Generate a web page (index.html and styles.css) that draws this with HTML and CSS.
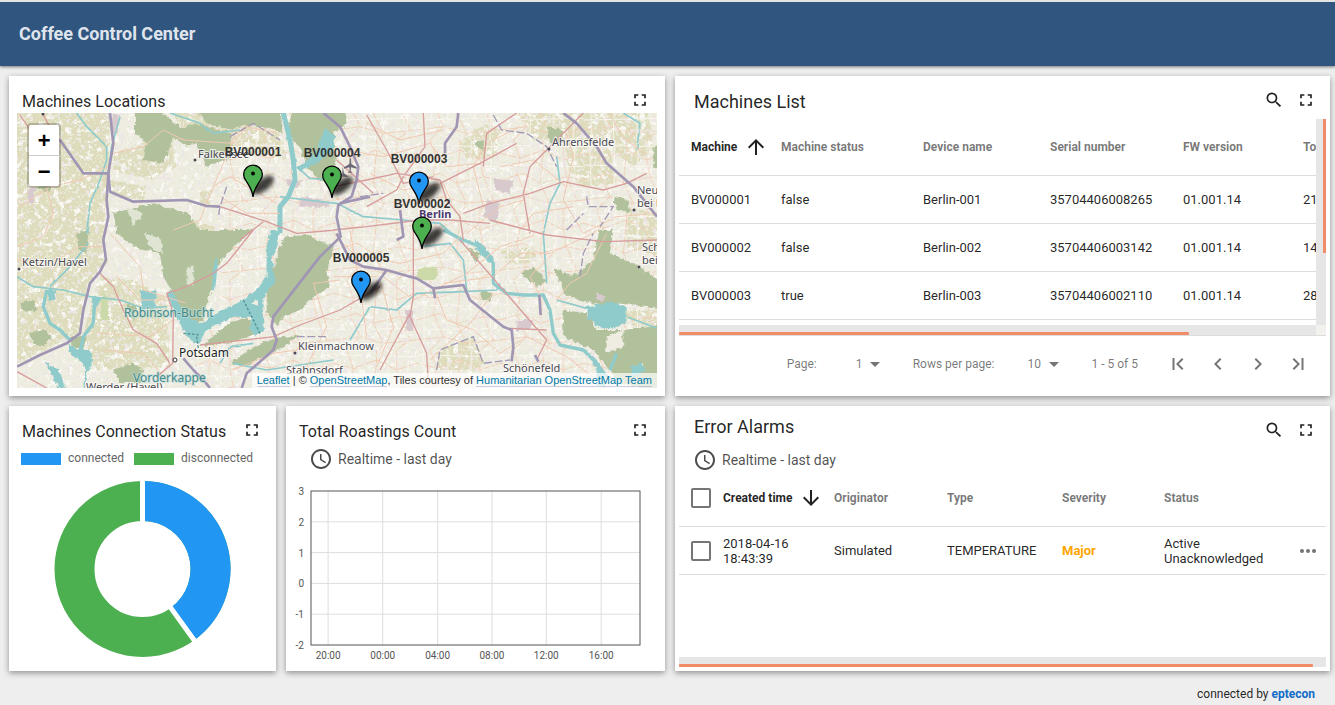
FILE: index.html
```
<!DOCTYPE html>
<html lang="en">
<head>
<meta charset="utf-8">
<title>Coffee Control Center</title>
<link rel="stylesheet" href="styles.css">
</head>
<body>
<svg class="defs" aria-hidden="true">
  <symbol id="i-full" viewBox="0 0 24 24"><path d="M7 14H5v5h5v-2H7v-3zm-2-4h2V7h3V5H5v5zm12 7h-3v2h5v-5h-2v3zM14 5v2h3v3h2V5h-5z"/></symbol>
  <symbol id="i-search" viewBox="0 0 24 24"><path d="M15.5 14h-.79l-.28-.27A6.47 6.47 0 0 0 16 9.5 6.5 6.5 0 1 0 9.5 16c1.61 0 3.09-.59 4.23-1.57l.27.28v.79l5 4.99L20.49 19l-4.99-5zm-6 0C7.01 14 5 11.99 5 9.5S7.01 5 9.5 5 14 7.01 14 9.5 11.99 14 9.5 14z"/></symbol>
  <symbol id="i-clock" viewBox="0 0 24 24"><path d="M11.99 2C6.47 2 2 6.48 2 12s4.47 10 9.99 10C17.52 22 22 17.52 22 12S17.52 2 11.99 2zM12 20c-4.42 0-8-3.58-8-8s3.58-8 8-8 8 3.58 8 8-3.58 8-8 8zm.5-13H11v6l5.25 3.15.75-1.23-4.5-2.67z"/></symbol>
  <symbol id="i-arrow" viewBox="0 0 24 24"><path d="M4 12l1.41 1.41L11 7.83V20h2V7.83l5.58 5.59L20 12l-8-8-8 8z"/></symbol>
  <symbol id="i-next" viewBox="0 0 24 24"><path d="M10 6L8.590 7.410 13.170 12l-4.580 4.590L10 18l6-6z"/></symbol>
  <symbol id="i-last" viewBox="0 0 24 24"><path d="M6.590 7.410L11.180 12l-4.590 4.590L8 18l6-6-6-6zM15.500 6h2v12h-2z"/></symbol>
  <symbol id="i-pin" viewBox="-12 -36 36 38" overflow="visible">
    <ellipse cx="10" cy="-12" rx="13" ry="6" transform="rotate(-38 10 -12)" class="pin-shadow"/>
    <path d="M0 0C-.8-8-4-11-7.500-17A9.300 9.300 0 1 1 7.500-17C4-11 .8-8 0 0z" stroke="#000" stroke-width="1.300"/>
    <circle cx="0" cy="-23.500" r="1.900" fill="#000"/>
  </symbol>
</svg>

<header class="topbar"><h1>Coffee Control Center</h1></header>

<main class="board">
  <section class="card card-map">
    <div class="card-head"><h2>Machines Locations</h2><button class="icon-btn" aria-label="Fullscreen"><svg class="icon"><use href="#i-full"/></svg></button></div>
    <div class="map">
      <svg class="map-art" viewBox="0 0 640 275" preserveAspectRatio="xMidYMid slice" role="img" aria-label="Map of Berlin">
        <defs>
          <filter id="rough" x="-5%" y="-5%" width="110%" height="110%"><feTurbulence type="fractalNoise" baseFrequency=".07" numOctaves="3" seed="4"/><feDisplacementMap in="SourceGraphic" scale="16" xChannelSelector="R" yChannelSelector="G"/></filter>
          <filter id="wobble" x="-5%" y="-5%" width="110%" height="110%"><feTurbulence type="fractalNoise" baseFrequency=".04" numOctaves="2" seed="9"/><feDisplacementMap in="SourceGraphic" scale="6" xChannelSelector="R" yChannelSelector="G"/></filter>
          <filter id="speckGreen" x="0" y="0" width="100%" height="100%"><feTurbulence type="fractalNoise" baseFrequency=".11" numOctaves="3" seed="21"/><feColorMatrix values="0 0 0 0 .79  0 0 0 0 .84  0 0 0 0 .68  14 0 0 0 -8.400"/></filter>
          <filter id="speckPink" x="0" y="0" width="100%" height="100%"><feTurbulence type="fractalNoise" baseFrequency=".07" numOctaves="3" seed="33"/><feColorMatrix values="0 0 0 0 .85  0 0 0 0 .79  0 0 0 0 .80  0 14 0 0 -8.800"/></filter>
          <filter id="speckPale" x="0" y="0" width="100%" height="100%"><feTurbulence type="fractalNoise" baseFrequency=".05" numOctaves="4" seed="52"/><feColorMatrix values="0 0 0 0 .945  0 0 0 0 .93  0 0 0 0 .89  14 0 0 0 -8.300"/></filter>
          <pattern id="streets" width="250" height="210" patternUnits="userSpaceOnUse">
            <g fill="none" stroke="#f0cfb9" stroke-width="3">
              <path d="M0 40 60 55 130 30 190 60 250 40M0 120 70 100 120 130 200 110 250 120M0 180 80 170 150 190 250 180M40 0 60 55 50 100 80 170 40 210M130 0 130 30 120 130 150 190 140 210M190 0 190 60 200 110 230 180 190 210"/>
            </g>
            <path d="M20 0 25 210M95 0 90 210M165 0 160 210M225 0 220 210M0 15 250 20M0 75 250 80M0 150 250 145" fill="none" stroke="#faf7f1" stroke-width="3"/>
          </pattern>
        </defs>
        <g transform="translate(-17 -113) scale(.333333)">
          <rect x="51" y="339" width="1920" height="825" fill="#efece2"/>
          <g filter="url(#rough)">
            <g fill="#dedcbc">
              <path d="M30 320H330L325 520 310 720 320 790 260 860 240 1000 30 1100z"/>
              <path d="M300 830 400 840 500 900 510 1100 290 1110 250 1000z"/>
              <path d="M340 465 480 405 520 430 530 500 450 540 340 510z"/>
              <path d="M500 320H830L860 480 700 450 560 400z"/>
              <path d="M330 540 440 560 430 600 340 590zM600 570 640 570 630 620 600 610zM580 660 660 690 650 760 600 740z"/>
              <path d="M1540 320H1800L1830 410 1800 440 1700 410 1600 420z"/>
              <path d="M1820 320H1940L1960 440 1900 500 1830 450z"/>
              <path d="M1380 430 1450 370 1500 390 1490 470 1400 480z"/>
              <path d="M1700 430 1830 450 1850 550 1740 560 1700 500zM1880 620 1990 650 1990 780 1880 740z"/>
              <path d="M1310 1050 1420 1010 1450 1090 1430 1110 1310 1110zM1500 750 1600 740 1610 790 1520 790zM1870 930 1990 930 1990 970 1900 980z"/>
            </g>
          </g>
          <rect x="51" y="339" width="1920" height="825" filter="url(#speckPale)"/>
          <path d="M660 339H1971V1164H560L660 900z" fill="url(#streets)" filter="url(#wobble)"/>
          <rect x="51" y="339" width="1920" height="825" filter="url(#speckGreen)"/>
          <rect x="51" y="339" width="1920" height="825" filter="url(#speckPink)"/>
          <g filter="url(#rough)">
            <g fill="#b1c19c">
              <path d="M405 335 480 335 545 385 590 370 690 400 700 470 620 500 590 430 560 440 520 410 490 490 430 480 440 430 405 400z"/>
              <path d="M580 320H840L850 400 800 380 740 375 690 390 620 370z"/>
              <path d="M880 320H1030L1040 370 1000 400 1010 520 960 545 920 500 900 440 860 400z"/>
              <path d="M340 640 460 610 560 640 600 690 760 690 700 740 650 800 640 850 620 910 610 960 560 985 540 960 520 880 490 830 480 760 400 740 350 700z"/>
              <path d="M850 710 920 705 1000 740 980 820 990 860 930 900 900 930 850 950 830 975 800 940 800 870 825 790z"/>
              <path d="M610 1035 680 975 740 950 775 1000 700 1025 620 1040zM690 1090 760 1040 820 1015 900 1005 820 1060 730 1100z"/>
              <path d="M340 1110 400 1090 430 1110 420 1150 360 1150zM90 1000 130 990 155 1010 130 1040 100 1030zM210 1010 260 1010 250 1050 215 1040zM230 700 270 690 260 760 235 750zM60 910 100 900 110 930 70 935zM110 560 150 555 150 580zM380 910 410 920 400 960z"/>
              <path d="M1640 380 1690 390 1690 430 1650 430zM1840 590 1885 600 1890 640 1850 630zM1960 440 1990 430 1990 520 1960 500zM1420 430 1450 420 1455 460zM1440 870 1480 880 1470 905 1445 895z"/>
              <path d="M1660 800 1720 830 1780 780 1795 690 1840 690 1830 760 1900 790 1990 850 1990 930 1880 910 1800 915 1700 890z"/>
              <path d="M1690 930 1760 940 1790 990 1870 990 1990 970 1990 1180 1860 1150 1780 1050 1690 1010zM1560 820 1600 800 1640 840 1610 860zM1400 740 1440 760 1430 790z"/>
            </g>
            <path d="M380 620 430 640 400 680zM430 700 480 710 490 760 450 740zM560 800 580 800 580 860 560 850z" fill="#dfe5d2"/>
            <path d="M1820 1010 1870 990 1870 1040 1820 1060zM1890 1100 1930 1090 1920 1120z" fill="#efece2"/>
            <path d="M1250 805 1310 800 1310 840 1255 840zM310 860 330 960 300 960z" fill="#cbdaa8"/>
            <path d="M1460 600 1500 610 1490 670 1450 650zM1480 540 1540 540 1530 580 1490 570zM1550 960 1600 960 1590 990 1550 990zM335 340 358 345 350 400 335 400zM85 560 105 560 100 610 85 610zM900 590 980 600 990 620 900 620zM1215 930 1240 930 1240 990 1220 990zM860 540 900 540 895 560 860 560zM1790 880 1820 890 1800 910z" fill="#d8c9ce"/>
            <g fill="#90cbcc">
              <path d="M812 690 840 690 832 740 815 770 825 850 790 890 790 930 795 990 765 1005 750 990 755 950 700 950 640 980 610 1000 600 1030 580 1030 550 990 500 890 515 870 560 950 600 970 660 935 720 905 770 870 800 830 800 740z"/>
              <path d="M975 385 1005 410 1000 450 950 490 900 515 890 500 940 470z"/>
              <path d="M422 872H467V920L425 922z"/>
              <path d="M140 870 165 870 165 895 150 910zM275 890 305 890 300 910 280 925zM205 1030 230 1050 270 1050 278 1090 260 1120 255 1164 250 1164 255 1110 240 1080 210 1060z"/>
              <path d="M1760 920 1840 905 1880 925 1880 965 1850 985 1800 985 1765 955zM1890 1100 1920 1090 1940 1110 1900 1130z"/>
              <path d="M1420 720 1450 735 1480 775 1470 790 1430 750zM1760 1050 1790 1080 1815 1120 1815 1164 1790 1150 1790 1110z"/>
              <path d="M135 1085 180 1115 195 1164H175L160 1130z"/>
            </g>
            <circle cx="767" cy="910" r="9" fill="#efece2"/>
          </g>
          <g class="line" stroke="#90cbcc" filter="url(#wobble)">
            <path stroke-width="15" d="M850 339 870 420 880 480 885 540 865 590 840 620 840 700"/>
            <path stroke-width="5" d="M840 590 920 600 1010 610 1090 650 1210 660 1320 670 1390 730M51 830 100 860 190 870 270 890 360 900 430 925 500 920M230 339 260 380 320 440 320 480 300 540 270 610 260 700M360 350 335 440 325 520M265 730 210 800 150 860M510 339 600 370 640 400 720 390M890 500 930 535 1000 540M660 1090 690 1040 760 1030M700 1090 800 1110 900 1095 1000 1080M1050 1020 1110 920 1190 930 1250 880 1390 875 1490 870 1500 850M1670 470 1680 550 1650 610 1630 700 1640 850M1870 339 1920 370 1910 450M1270 740 1350 730 1390 780 1400 870M1670 900 1760 925M1880 950 1971 985"/>
            <path stroke-width="10" d="M1330 690 1390 720 1440 740 1480 790 1480 850 1520 880 1570 885 1630 885 1650 930 1660 1000 1680 1035 1750 1050 1790 1090 1820 1130M140 870 130 920 150 970 180 990 210 1020M285 890 280 970 250 1010 240 1060M640 830 650 780 640 870M1850 1060 1830 1110"/>
          </g>
          <g class="line" stroke="#f0c9b2" stroke-width="3" filter="url(#wobble)">
            <path d="M340 460 430 440 490 390 550 420 700 430 740 380 830 400M60 620 150 560 240 540 325 500M51 780 150 790 240 740 310 740M330 700 420 800 430 870 560 910M51 740 130 710 160 640 140 560 160 480M350 830 420 900 500 900M520 690 600 660 640 560 690 530 830 610M640 560 700 420M660 590 740 640 840 640M1000 700 1060 760 1200 790 1330 760 1400 690M920 1100 980 980 940 850 1020 840M1050 690 1080 860 1100 1010M1000 830 1150 830 1240 900 1400 820 1500 740 1620 700M1300 860 1340 960 1420 990 1500 1060M1480 880 1410 970 1290 1080M1130 1100 1180 980 1140 840M1330 850 1480 830 1560 760 1650 760 1800 690M1400 700 1500 620 1570 600M1450 620 1420 500 1460 430 1560 380M1500 500 1600 480 1700 560M1700 400 1720 470 1690 600 1750 700 1850 650 1971 640M1560 690 1600 640 1720 620M1830 339 1860 400 1940 470M1100 370 1200 420 1330 390M1040 450 1150 470 1290 430 1340 500 1440 490M1110 520 1210 570 1330 550 1360 620M1670 900 1710 850 1760 820 1820 700M1620 890 1590 830 1660 760M700 1110 820 1060 960 1040M520 960 450 1010 300 1000M310 1050 430 1060 500 1140M1500 1060 1580 1010 1700 1070 1790 1140"/>
          </g>
          <g class="line" stroke="#d79d9c" stroke-width="4">
            <path d="M51 1115 140 1164M60 345 90 390M130 345 160 400 180 420M660 620 800 665 890 700 1010 690M720 720 790 665M760 690 680 790 640 820 560 860 500 880 520 940 518 1090 470 1130M300 820 340 860 370 930 400 990 470 1030 510 1090M600 1035 820 1010 900 975 1020 930 1090 890 1140 860M1240 690 1240 890 1230 950 1280 1060 1285 1150M1230 940 1140 1110M1380 720 1640 1020 1610 1080M1530 985 1640 990M1100 345 1160 450 1210 550 1300 530M1010 480 1120 580M1270 339 1275 440 1210 530 1190 570 1100 620M1320 540 1340 600 1380 650 1390 720M1320 550 1440 490 1550 430M1390 640 1470 610 1590 580 1690 545 1810 570 1880 550 1940 520M1570 580 1590 500 1640 450 1750 339M1570 580 1590 700M1470 660 1640 705 1810 725 1971 720M1450 500 1460 400 1550 339M1000 560 1100 540 1190 520 1320 540M1000 690 1100 680 1260 660 1350 660 1470 670"/>
          </g>
          <g class="line" stroke="#a39bb6" stroke-width="4">
            <path d="M680 560 660 620 655 650M690 410 760 370 840 420M1080 590 1150 580M1480 345 1505 390 1580 400 1640 440 1670 500M1310 1110 1320 1050 1420 1010 1450 1090 1530 1080M1740 830 1750 760 1780 700M1760 590 1765 620 1840 620 1800 680M890 1010 980 1010M1700 690 1750 640" stroke-dasharray="24 8"/>
            <path d="M730 900 780 1000M550 1000 600 1005M590 1010 595 1045" stroke="#4e9394" stroke-dasharray="8 5"/>
          </g>
          <g class="line" stroke="#a096b4" stroke-width="8">
            <path d="M330 339 340 430 325 520 320 600 325 650 310 720 318 780 300 815 270 850 250 930 240 1000 200 1030 120 1065 51 1100"/>
            <path d="M180 420 250 520 325 520 330 575 400 605 560 600 620 618 660 620M1690 339 1730 370 1790 440 1820 490 1900 560 1971 650M1375 339 1370 380 1335 430 1335 460"/>
            <path d="M970 339 1020 380 1050 440 1075 500 1070 540 1055 590 1015 615 1010 650 1022 710 960 770 820 950 815 980 830 1020 820 1050 740 1120 725 1164"/>
            <path d="M1020 610 1110 590M1200 630 1210 710 1190 720M1010 700 1050 780 1090 800 1160 810 1230 830 1250 835 1300 865 1390 855 1410 900 1510 980 1535 990 1540 1040 1535 1084M1160 810 1110 880M1618 885 1622 945M1605 1065 1615 1085M550 1075 580 1110 610 1140 630 1164M1300 865 1305 895"/>
          </g>
          <g fill="#6d6a78"><path d="M1049 475 1053 475 1054 492 1070 502 1070 506 1053 502 1052 513 1058 518 1042 518 1049 513 1048 502 1032 506 1032 502 1048 492zM1028 500 1032 520 1046 530 1026 530z"/></g>
        </g>
        <g class="place">
          <circle cx="178" cy="47" r="1.500"/><circle cx="532" cy="36" r="1.500"/><circle cx="617" cy="97" r="1.500"/><circle cx="622" cy="154" r="1.500"/><circle cx="2" cy="156" r="1.500"/><circle cx="278" cy="240" r="1.500"/><circle cx="26" cy="1" r="1.500"/>
          <circle cx="158" cy="247" r="2" class="ring"/>
          <text x="181" y="45">Falkensee</text>
          <text x="535" y="33">Ahrensfelde</text>
          <text x="620" y="81">Neu</text><text x="620" y="94">bei B</text>
          <text x="625" y="138">Sch</text><text x="625" y="151">bei</text>
          <text x="5" y="153">Ketzin/Havel</text>
          <text x="281" y="237">Kleinmachnow</text>
          <text x="269" y="261">Stahnsdorf</text>
          <text x="486" y="259">Schönefeld</text>
          <text x="69" y="278">Werder (Havel)</text>
          <text x="162" y="244" class="town">Potsdam</text>
          <text x="107" y="204" class="lake">Robinson-Bucht</text>
          <text x="116" y="269" class="lake">Vorderkappe</text>
          <text x="402" y="105" class="city">Berlin</text>
        </g>
        <g class="pins">
          <use href="#i-pin" x="224" y="48" width="36" height="38" class="green"/>
          <use href="#i-pin" x="303" y="49" width="36" height="38" class="green"/>
          <use href="#i-pin" x="390" y="55" width="36" height="38" class="blue"/>
          <use href="#i-pin" x="393" y="100" width="36" height="38" class="green"/>
          <use href="#i-pin" x="332" y="154" width="36" height="38" class="blue"/>
          <text x="236" y="43">BV000001</text>
          <text x="315" y="44">BV000004</text>
          <text x="402" y="50">BV000003</text>
          <text x="405" y="95">BV000002</text>
          <text x="344" y="149">BV000005</text>
        </g>
      </svg>
      <div class="zoom"><button aria-label="Zoom in">+</button><button aria-label="Zoom out">−</button></div>
      <p class="credit"><a href="#">Leaflet</a> | © <a href="#">OpenStreetMap</a>, Tiles courtesy of <a href="#">Humanitarian OpenStreetMap Team</a></p>
    </div>
  </section>

  <section class="card card-list">
    <div class="card-head wide"><h2 class="big">Machines List</h2><button class="icon-btn" aria-label="Search"><svg class="icon"><use href="#i-search"/></svg></button><button class="icon-btn" aria-label="Fullscreen"><svg class="icon"><use href="#i-full"/></svg></button></div>
    <div class="scroll both">
      <div class="view">
        <table class="list">
          <colgroup><col class="c102"><col class="c142"><col class="c127"><col class="c133"><col class="c120"><col></colgroup>
          <thead><tr><th class="sorted"><span class="sort">Machine<svg class="icon24"><use href="#i-arrow"/></svg></span></th><th>Machine status</th><th>Device name</th><th>Serial number</th><th>FW version</th><th>To</th></tr></thead>
          <tbody>
            <tr><td>BV000001</td><td>false</td><td>Berlin-001</td><td>35704406008265</td><td>01.001.14</td><td>21</td></tr>
            <tr><td>BV000002</td><td>false</td><td>Berlin-002</td><td>35704406003142</td><td>01.001.14</td><td>14</td></tr>
            <tr><td>BV000003</td><td>true</td><td>Berlin-003</td><td>35704406002110</td><td>01.001.14</td><td>28</td></tr>
          </tbody>
        </table>
      </div>
      <div class="vbar"><i></i></div>
      <div class="hbar"><i class="w79"></i></div>
      <div class="corner"></div>
    </div>
    <div class="pager">
      <label for="page">Page:</label>
      <span class="select"><select id="page"><option>1</option></select></span>
      <label for="rows">Rows per page:</label>
      <span class="select"><select id="rows"><option>10</option></select></span>
      <span class="range">1 - 5 of 5</span>
      <button aria-label="First page"><svg class="icon24 flip"><use href="#i-last"/></svg></button>
      <button aria-label="Previous page"><svg class="icon24 flip"><use href="#i-next"/></svg></button>
      <button aria-label="Next page"><svg class="icon24"><use href="#i-next"/></svg></button>
      <button aria-label="Last page"><svg class="icon24"><use href="#i-last"/></svg></button>
    </div>
  </section>

  <section class="card card-donut">
    <div class="card-head"><h2>Machines Connection Status</h2><button class="icon-btn" aria-label="Fullscreen"><svg class="icon"><use href="#i-full"/></svg></button></div>
    <div class="legend"><i class="sw-blue"></i><span>connected</span><i class="sw-green"></i><span>disconnected</span></div>
    <div class="donut">
      <svg viewBox="-90 -90 180 180" role="img" aria-label="40% connected, 60% disconnected">
        <circle r="68" fill="none" stroke="#4caf50" stroke-width="40"/>
        <path d="M0-68A68 68 0 0 1 39.970 55.010" fill="none" stroke="#2196f3" stroke-width="40"/>
        <path d="M0-45V-90M26.500 36.400 53.500 73.700" stroke="#fff" stroke-width="5"/>
      </svg>
    </div>
  </section>

  <section class="card card-chart">
    <div class="card-head"><h2>Total Roastings Count</h2><button class="icon-btn" aria-label="Fullscreen"><svg class="icon"><use href="#i-full"/></svg></button></div>
    <button class="window"><svg class="icon24"><use href="#i-clock"/></svg>Realtime - last day</button>
    <div class="plot">
      <svg role="img" aria-label="Total roastings count, last day">
        <g stroke="#dedede"><line x1="5.200%" x2="5.200%" y2="100%"/><line x1="21.800%" x2="21.800%" y2="100%"/><line x1="38.500%" x2="38.500%" y2="100%"/><line x1="55%" x2="55%" y2="100%"/><line x1="71.500%" x2="71.500%" y2="100%"/><line x1="88.200%" x2="88.200%" y2="100%"/>
        <line x2="100%" y1="20%" y2="20%"/><line x2="100%" y1="40%" y2="40%"/><line x2="100%" y1="60%" y2="60%"/><line x2="100%" y1="80%" y2="80%"/></g>
        <rect width="100%" height="100%" fill="none" stroke="#545454"/>
        <g class="ylab"><text x="-7" y="0" dy="4">3</text><text x="-7" y="20%" dy="4">2</text><text x="-7" y="40%" dy="4">1</text><text x="-7" y="60%" dy="4">0</text><text x="-7" y="80%" dy="4">-1</text><text x="-7" y="100%" dy="4">-2</text></g>
        <g class="xlab"><text x="5.200%" y="100%" dy="14">20:00</text><text x="21.800%" y="100%" dy="14">00:00</text><text x="38.500%" y="100%" dy="14">04:00</text><text x="55%" y="100%" dy="14">08:00</text><text x="71.500%" y="100%" dy="14">12:00</text><text x="88.200%" y="100%" dy="14">16:00</text></g>
      </svg>
    </div>
  </section>

  <section class="card card-alarms">
    <div class="card-head wide"><div class="titles"><h2 class="big">Error Alarms</h2><button class="window"><svg class="icon24"><use href="#i-clock"/></svg>Realtime - last day</button></div><button class="icon-btn" aria-label="Search"><svg class="icon"><use href="#i-search"/></svg></button><button class="icon-btn" aria-label="Fullscreen"><svg class="icon"><use href="#i-full"/></svg></button></div>
    <div class="scroll">
      <div class="view">
        <table class="alarms">
          <colgroup><col class="c44"><col class="c111"><col class="c113"><col class="c115"><col class="c102"><col><col class="c44"></colgroup>
          <thead><tr><th><input type="checkbox" aria-label="Select all"></th><th class="sorted"><span class="sort">Created time<svg class="icon24 down"><use href="#i-arrow"/></svg></span></th><th>Originator</th><th>Type</th><th>Severity</th><th>Status</th><th></th></tr></thead>
          <tbody><tr><td><input type="checkbox" aria-label="Select alarm"></td><td>2018-04-16<br>18:43:39</td><td>Simulated</td><td>TEMPERATURE</td><td class="major">Major</td><td>Active<br>Unacknowledged</td><td><button class="more" aria-label="Details"><svg viewBox="0 0 18 6"><circle cx="3" cy="3" r="2"/><circle cx="9" cy="3" r="2"/><circle cx="15" cy="3" r="2"/></svg></button></td></tr></tbody>
        </table>
      </div>
      <div class="hbar"><i class="w98"></i></div>
    </div>
  </section>
</main>

<footer>connected by <a href="#">eptecon</a></footer>
</body>
</html>
```
FILE: styles.css
```
* { box-sizing: border-box; }
body {
  margin: 0;
  min-height: 100vh;
  display: flex;
  flex-direction: column;
  background: #eee;
  color: rgba(0, 0, 0, .87);
  font: 13px/15px Roboto, sans-serif;
}
h1, h2, p { margin: 0; font-weight: 400; }
button { border: 0; padding: 0; background: none; font: inherit; color: inherit; cursor: pointer; }
svg { display: block; fill: currentColor; }
.defs { position: absolute; width: 0; height: 0; }
.icon { width: 20px; height: 20px; }
.icon24 { width: 24px; height: 24px; flex: none; }
.flip { transform: scaleX(-1); }
.down { transform: scaleY(-1); }

.topbar {
  flex: none;
  height: 66px;
  padding: 0 19px;
  display: flex;
  align-items: center;
  border-top: 2px solid #e2e2e2;
  background: #305680;
  color: rgba(255, 255, 255, .87);
  box-shadow: 0 1px 3px rgba(0, 0, 0, .5);
}
.topbar h1 { font-size: 18px; line-height: 24px; font-weight: 700; }

.board {
  flex: 1;
  display: grid;
  grid-template-columns: 267fr 379fr 655fr;
  grid-template-rows: minmax(320px, 320fr) minmax(265px, 265fr);
  gap: 10px;
  padding: 10px 5px 0 9px;
}
.card {
  min-width: 0;
  display: flex;
  flex-direction: column;
  padding: 8px;
  background: #fff;
  box-shadow: 0 2px 6px rgba(0, 0, 0, .4);
}
.card-map { grid-column: 1 / 3; }
.card-list, .card-alarms { padding: 4px; }

.card-head { display: flex; flex: none; height: 29px; padding: 6px 7px 0 5px; }
.card-donut .card-head { padding-right: 6px; }
.card-head h2 { flex: 1; white-space: nowrap; font-size: 16px; line-height: 23px; }
.icon-btn { width: 20px; height: 20px; }
.card-donut .icon-btn { margin-left: -8px; }
.card-head.wide { height: 39px; padding: 10px 10px 0 15px; gap: 12px; }
.card-head h2.big { font-size: 18px; line-height: 24px; }
.card-alarms .card-head.wide { height: 60px; }
.titles { flex: 1; margin-top: -5px; }

/* map */
.map { position: relative; flex: 1; min-height: 0; overflow: hidden; }
.map-art { position: absolute; inset: 0; width: 100%; height: 100%; }
.line { fill: none; stroke-linejoin: round; }
.place { font: 11px "Noto Sans", sans-serif; fill: #4a4850; }
.place text { stroke: rgba(255, 255, 255, .75); stroke-width: 2px; paint-order: stroke; }
.place .town { font-size: 12px; fill: #222; }
.place .lake { font-size: 12px; fill: #46898c; stroke: rgba(190, 225, 220, .6); }
.place .city { font-weight: 700; fill: #4e3b70; }
.place .ring { fill: #fff; stroke: #333; }
.pins { font: 700 12px "Liberation Sans", Arial, sans-serif; text-anchor: middle; fill: #333; }
.pins .green { fill: #4caf50; }
.pins .blue { fill: #2196f3; }
.pin-shadow { fill: rgba(0, 0, 0, .75); filter: blur(2px); }
.zoom {
  position: absolute;
  top: 10px;
  left: 10px;
  border: 2px solid rgba(0, 0, 0, .2);
  border-radius: 4px;
  background: #fff;
  background-clip: padding-box;
}
.zoom button {
  display: block;
  width: 30px;
  height: 30px;
  padding-top: 6px;
  font: 700 22px/24px "Liberation Mono", monospace;
  color: #000;
}
.zoom button + button { border-top: 1px solid #ccc; height: 31px; }
.credit {
  position: absolute;
  right: 0;
  bottom: 0;
  padding: 0 5px;
  background: rgba(255, 255, 255, .7);
  color: #333;
  white-space: nowrap;
  font: 11px/15px "Liberation Sans", Arial, sans-serif;
}
.credit a { color: #0078a8; text-decoration: none; border-bottom: 1px solid rgba(64, 84, 178, .25); }

/* tables */
.scroll { flex: 1; min-height: 0; display: grid; grid-template: minmax(0, 1fr) 10px / minmax(0, 1fr); }
.scroll.both { grid-template-columns: minmax(0, 1fr) 10px; border-bottom: 1px solid #ddd; }
.view { overflow: hidden; }
.vbar, .hbar { background: #e6e6e6; display: flex; }
.vbar { justify-content: flex-end; }
.hbar { align-items: flex-end; }
.vbar i { width: 3px; height: 65%; background: #f08d68; }
.hbar i { height: 3px; background: #f08d68; border-radius: 1px; }
.w79 { width: 80%; }
.w98 { width: 98%; }
.corner { background: #f3f1ee; }
table { width: 100%; table-layout: fixed; border-collapse: separate; border-spacing: 0; }
table.list { width: 126%; }
.c44 { width: 44px; } .c102 { width: 102px; } .c111 { width: 111px; } .c113 { width: 113px; }
.c115 { width: 115px; } .c120 { width: 120px; } .c127 { width: 127px; } .c133 { width: 133px; } .c142 { width: 142px; }
th, td { padding: 0; text-align: left; border-bottom: 1px solid #ddd; white-space: nowrap; }
th:first-child, td:first-child { padding-left: 12px; }
th { height: 57px; font-size: 12px; font-weight: 700; color: rgba(0, 0, 0, .54); }
td { height: 48px; }
th.sorted { color: rgba(0, 0, 0, .87); }
.sort { display: flex; align-items: center; gap: 7px; }
.major { font-weight: 700; color: #ffa500; }
input[type="checkbox"] {
  appearance: none;
  display: block;
  width: 20px;
  height: 20px;
  margin: 0;
  border: 2px solid #757575;
  border-radius: 2px;
}
.more { display: block; width: 18px; margin: 0 auto 0 17px; color: #757575; }

.pager {
  flex: none;
  height: 56px;
  padding-right: 8px;
  display: flex;
  align-items: center;
  justify-content: flex-end;
  font-size: 12px;
  color: rgba(0, 0, 0, .54);
}
.pager button { width: 40px; display: flex; justify-content: center; }
.select { position: relative; margin: 0 33px; }
.select::after {
  content: "";
  position: absolute;
  right: 0;
  top: 50%;
  margin-top: -2px;
  border: 5px solid transparent;
  border-top-color: currentColor;
  border-bottom: 0;
}
.select select {
  appearance: none;
  border: 0;
  background: none;
  padding: 0 17px 0 6px;
  font: inherit;
  color: inherit;
}
.select + label + .select select { padding-left: 0; }
.range { margin-right: 20px; }

.window { display: flex; align-items: center; gap: 5px; font-size: 14px; line-height: 24px; color: rgba(0, 0, 0, .7); }
.titles .window { margin: 9px 0 0 -1px; }
.card-chart .window { margin: 4px 0 0 15px; }

/* charts */
.legend { display: flex; align-items: center; gap: 7px; margin-top: 7px; padding: 1px 4px; font-size: 12px; color: #666; }
.legend i { width: 40px; height: 12px; }
.legend span + i { margin-left: 3px; }
.sw-blue { background: #2196f3; }
.sw-green { background: #4caf50; }
.donut { flex: 1; min-height: 120px; margin: 12px 0 4px; contain: size; }
.donut svg { width: 100%; height: 100%; }
.plot { flex: 1; min-height: 0; display: grid; padding: 20px 17px 18px; }
.plot svg { width: 100%; height: 100%; overflow: visible; font-size: 10px; fill: #545454; }
.ylab { text-anchor: end; }
.xlab { text-anchor: middle; }

footer { flex: none; padding: 16px 20px 3px; text-align: right; font-size: 12px; }
footer a { color: #106cc8; font-weight: 700; text-decoration: none; }
```
